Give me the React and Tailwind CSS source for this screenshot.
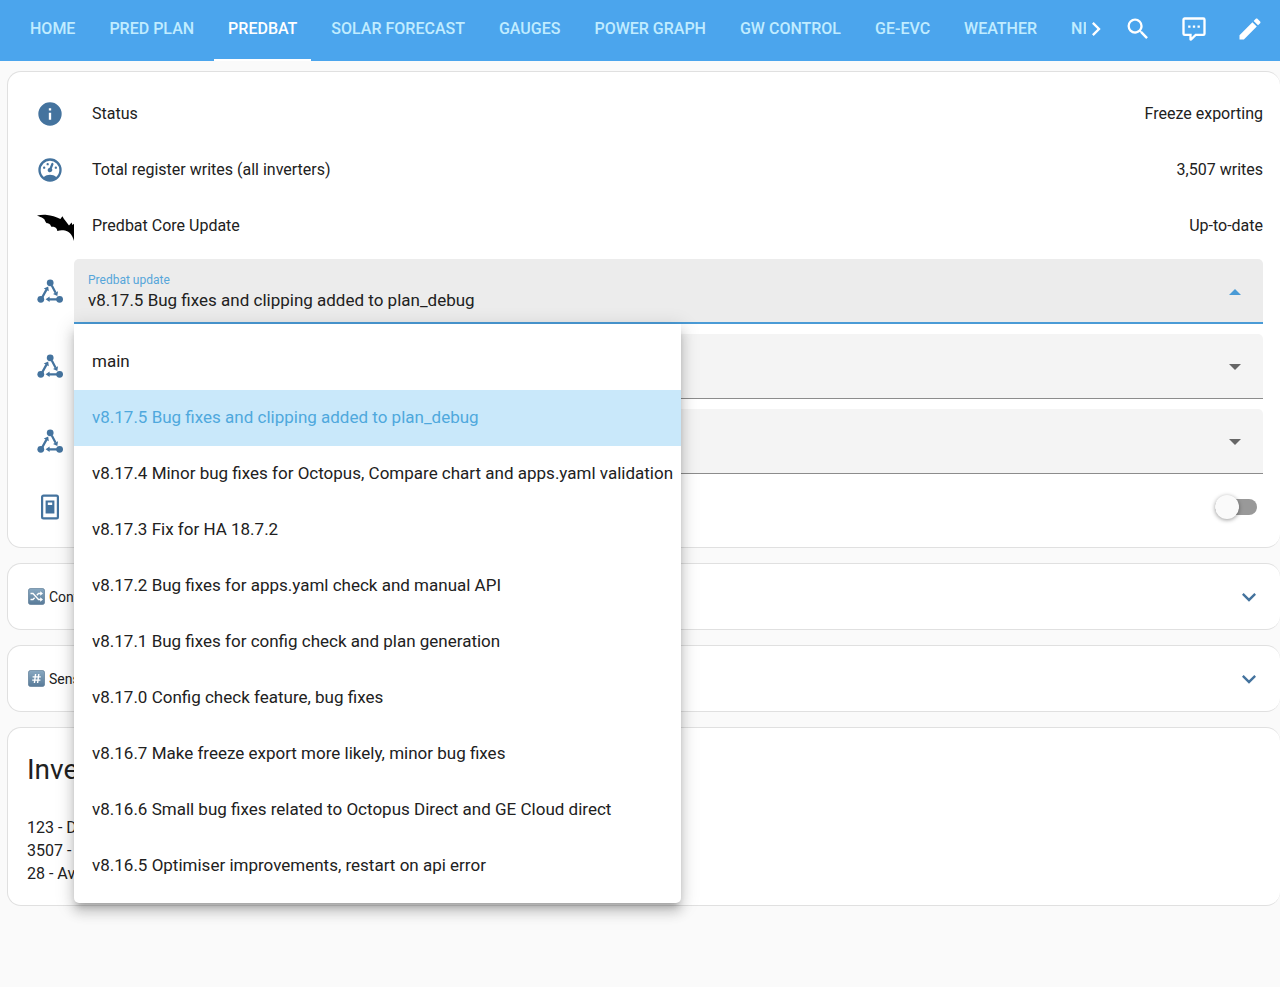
import { useState } from 'react';

const tabs = [
  'Home',
  'Pred Plan',
  'Predbat',
  'Solar Forecast',
  'Gauges',
  'Power Graph',
  'GW Control',
  'GE-EVC',
  'Weather',
  'NI',
];

const versions = [
  'main',
  'v8.17.5 Bug fixes and clipping added to plan_debug',
  'v8.17.4 Minor bug fixes for Octopus, Compare chart and apps.yaml validation',
  'v8.17.3 Fix for HA 18.7.2',
  'v8.17.2 Bug fixes for apps.yaml check and manual API',
  'v8.17.1 Bug fixes for config check and plan generation',
  'v8.17.0 Config check feature, bug fixes',
  'v8.16.7 Make freeze export more likely, minor bug fixes',
  'v8.16.6 Small bug fixes related to Octopus Direct and GE Cloud direct',
  'v8.16.5 Optimiser improvements, restart on api error',
];

const icons = {
  info: 'M13,9H11V7H13M13,17H11V11H13M12,2A10,10 0 0,0 2,12A10,10 0 0,0 12,22A10,10 0 0,0 22,12A10,10 0 0,0 12,2Z',
  gauge:
    'M12,2A10,10 0 0,0 2,12A10,10 0 0,0 12,22A10,10 0 0,0 22,12A10,10 0 0,0 12,2M12,4A8,8 0 0,1 20,12C20,14.4 19,16.5 17.3,18C15.9,16.7 14,16 12,16C10,16 8.2,16.7 6.7,18C5,16.5 4,14.4 4,12A8,8 0 0,1 12,4M14,5.89C13.62,5.9 13.26,6.15 13.1,6.54L11.81,9.77L11.71,10C11,10.13 10.41,10.6 10.14,11.26C9.73,12.29 10.23,13.45 11.26,13.86C12.29,14.27 13.45,13.77 13.86,12.74C14.12,12.08 14,11.32 13.57,10.76L13.67,10.5L14.96,7.29L14.97,7.26C15.17,6.75 14.92,6.17 14.41,5.96C14.28,5.91 14.15,5.89 14,5.89M10,6A1,1 0 0,0 9,7A1,1 0 0,0 10,8A1,1 0 0,0 11,7A1,1 0 0,0 10,6M7,9A1,1 0 0,0 6,10A1,1 0 0,0 7,11A1,1 0 0,0 8,10A1,1 0 0,0 7,9M17,9A1,1 0 0,0 16,10A1,1 0 0,0 17,11A1,1 0 0,0 18,10A1,1 0 0,0 17,9Z',
  search:
    'M9.5,3A6.5,6.5 0 0,1 16,9.5C16,11.11 15.41,12.59 14.44,13.73L14.71,14H15.5L20.5,19L19,20.5L14,15.5V14.71L13.73,14.44C12.59,15.41 11.11,16 9.5,16A6.5,6.5 0 0,1 3,9.5A6.5,6.5 0 0,1 9.5,3M9.5,5C7,5 5,7 5,9.5C5,12 7,14 9.5,14C12,14 14,12 14,9.5C14,7 12,5 9.5,5Z',
  assist:
    'M9,22A1,1 0 0,1 8,21V18H4A2,2 0 0,1 2,16V4C2,2.89 2.9,2 4,2H20A2,2 0 0,1 22,4V16A2,2 0 0,1 20,18H13.9L10.2,21.71C10,21.9 9.75,22 9.5,22H9M10,16V19.08L13.08,16H20V4H4V16H10M17,11H15V9H17V11M13,11H11V9H13V11M9,11H7V9H9V11Z',
  pencil:
    'M20.71,7.04C21.1,6.65 21.1,6 20.71,5.63L18.37,3.29C18,2.9 17.35,2.9 16.96,3.29L15.12,5.12L18.87,8.87M3,17.25V21H6.75L17.81,9.93L14.06,6.18L3,17.25Z',
  right: 'M8.59,16.58L13.17,12L8.59,7.41L10,6L16,12L10,18L8.59,16.58Z',
  down: 'M7.41,8.58L12,13.17L16.59,8.58L18,10L12,16L6,10L7.41,8.58Z',
};

const Icon = ({ name }) => (
  <svg viewBox="0 0 24 24" fill="currentColor" className="size-7 shrink-0" aria-hidden="true">
    <path d={icons[name]} />
  </svg>
);

const NetworkIcon = () => (
  <svg viewBox="0 0 28 28" className="size-7" fill="currentColor" aria-hidden="true">
    <circle cx="14.2" cy="4.8" r="3.4" />
    <circle cx="4.8" cy="21.3" r="3.4" />
    <circle cx="23.6" cy="21.3" r="3.4" />
    <path d="M6.2 19.4L10.5 11.6M15.8 7.6L19.6 14.8M21 21.3H13" stroke="currentColor" strokeWidth="2.2" fill="none" />
    <path d="M12.2 8.4L12.8 13.2L7.8 10.5ZM21.3 18.1L22 13.3L17 15.9ZM9.6 21.3L13.6 18.5V24.1Z" />
  </svg>
);

const SwitchIcon = () => (
  <svg viewBox="0 0 28 28" className="size-7" aria-hidden="true">
    <rect x="6.1" y="2.6" width="15.8" height="22.8" rx="1.4" fill="none" stroke="currentColor" strokeWidth="2.2" />
    <path fill="currentColor" fillRule="evenodd" d="M9.6 7.4H18.4V20.6H9.6ZM11.8 9.4V12H16.2V9.4Z" />
  </svg>
);

const BatIcon = () => (
  <svg viewBox="0 0 48 36" className="h-9 w-12" aria-hidden="true">
    <path d="M11 7.6C14 6.9 18 6.7 21 7C25 7.2 30 8.8 34.4 11L36.4 8.3L38 11L39.6 13L43 17.6L45.6 14.6L46.4 17L48 15.8V33C47 29.6 45.8 27 44 25.3C42.4 23.8 41 23 39 22.6C36 21.8 34 22.2 31.3 22.9C31.2 21.4 30.6 20.2 29.4 19.4C27.6 18.8 26.6 19.2 25.6 18.8C24.4 18.2 24.8 16.2 22.3 15.6C21.2 15.3 20.6 15.4 20 14.6C19 13 19 11.4 17.3 10.4C15.4 9.2 13.4 8.8 11 7.6Z" />
  </svg>
);

const Badge = ({ children }) => (
  <svg viewBox="0 0 17 17" className="size-[17px] shrink-0" aria-hidden="true">
    <defs>
      <linearGradient id="badge" x1="0" y1="0" x2="0" y2="1">
        <stop offset="0" stopColor="#89a9c2" />
        <stop offset="1" stopColor="#587a98" />
      </linearGradient>
    </defs>
    <rect x="0.4" y="0.4" width="16.2" height="16.2" rx="2.4" fill="url(#badge)" stroke="#64829c" strokeWidth="0.8" />
    <g fill="none" stroke="#fff" strokeWidth="1.4">
      {children}
    </g>
  </svg>
);

const Card = ({ className = '', children }) => (
  <section className={`rounded-[14px] border-y border-l border-[#e0e0e0] bg-white ${className}`}>
    {children}
  </section>
);

const Row = ({ icon, label, value }) => (
  <div className="flex h-14 items-center">
    <div className="flex w-12 shrink-0 justify-center text-[#44739e]">{icon}</div>
    <span className="flex-1 pl-[18px]">{label}</span>
    <span>{value}</span>
  </div>
);

const SelectRow = ({ id, label, options, value, onChange, open = false, onToggle, children }) => (
  <div className="flex items-center py-[5px]">
    <div className="flex w-12 shrink-0 justify-center text-[#44739e]">
      <NetworkIcon />
    </div>
    <div className="relative flex-1">
      <div
        className={`relative flex h-[65px] flex-col rounded-t-[5px] ${
          open ? 'border-b-2 border-[#4a9bd6] bg-[#ececec]' : 'border-b border-[#8c8c8c] bg-[#f4f4f4]'
        }`}
      >
        <label
          htmlFor={id}
          className={`pl-3.5 pt-3 text-xs leading-[18px] ${open ? 'text-[#56a6da]' : 'text-[#666666]'}`}
        >
          {label}
        </label>
        <select
          id={id}
          value={value}
          onChange={(e) => onChange(e.target.value)}
          onMouseDown={onToggle}
          className="w-full appearance-none bg-transparent pl-3.5 pr-14 text-[17px] leading-[22px] outline-none"
        >
          {options.map((option) => (
            <option key={option}>{option}</option>
          ))}
        </select>
        <svg
          viewBox="0 0 12 6"
          className={`pointer-events-none absolute right-[22px] top-[30px] h-1.5 w-3 ${
            open ? 'text-[#4a9bd6]' : 'rotate-180 text-[#666666]'
          }`}
          aria-hidden="true"
        >
          <path d="M6 0L12 6H0Z" fill="currentColor" />
        </svg>
      </div>
      {children}
    </div>
  </div>
);

const Expander = ({ title, badge }) => (
  <Card>
    <button type="button" className="flex h-[65px] w-full items-center pl-5 pr-[17px] text-left text-sm">
      {badge}
      <span className="flex-1 pl-1">{title}</span>
      <span className="text-[#44739e]">
        <Icon name="down" />
      </span>
    </button>
  </Card>
);

export default function App() {
  const [active, setActive] = useState('Predbat');
  const [open, setOpen] = useState(true);
  const [version, setVersion] = useState(versions[1]);
  const [mode, setMode] = useState('Monitor');
  const [restore, setRestore] = useState('None');
  const [readOnly, setReadOnly] = useState(false);

  const toggleMenu = (e) => {
    e.preventDefault();
    setOpen(!open);
  };

  return (
    <div className="min-h-screen bg-[#fafafa] font-[Roboto,sans-serif] text-base text-[#212121]">
      <header className="flex h-[61px] items-stretch bg-[#4ba5ed] pr-0.5 text-white">
        <nav className="flex min-w-0 flex-1 gap-1.5 overflow-hidden pl-4">
          {tabs.map((tab) => (
            <a
              key={tab}
              href="#"
              onClick={() => setActive(tab)}
              className={`flex shrink-0 items-center border-b-2 px-3.5 pb-0.5 font-medium uppercase ${
                tab === active ? 'border-white text-white' : 'border-transparent text-[#c0ecff]'
              }`}
            >
              {tab}
            </a>
          ))}
        </nav>
        <div className="flex pb-[3px]">
          <button type="button" aria-label="Scroll tabs" className="flex w-6 items-center justify-center pr-1">
            <Icon name="right" />
          </button>
          <button type="button" aria-label="Search" className="flex w-14 items-center justify-center">
            <Icon name="search" />
          </button>
          <button type="button" aria-label="Assist" className="flex w-14 items-center justify-center">
            <Icon name="assist" />
          </button>
          <button type="button" aria-label="Edit" className="flex w-14 items-center justify-center">
            <Icon name="pencil" />
          </button>
        </div>
      </header>

      <main className="flex flex-col gap-[15px] pl-[7px] pt-[10px]">
        <Card className="pb-3 pl-[18px] pr-[17px] pt-3.5">
          <Row icon={<Icon name="info" />} label="Status" value="Freeze exporting" />
          <Row icon={<Icon name="gauge" />} label="Total register writes (all inverters)" value="3,507 writes" />
          <Row icon={<BatIcon />} label="Predbat Core Update" value="Up-to-date" />

          <SelectRow
            id="update"
            label="Predbat update"
            options={versions}
            value={version}
            onChange={setVersion}
            open={open}
            onToggle={toggleMenu}
          >
            {open && (
              <ul
                role="listbox"
                aria-label="Predbat update"
                className="absolute left-0 top-full z-10 w-max rounded-b-[5px] bg-white pb-[9px] pt-[10px] text-[17px] shadow-[0_6px_6px_-3px_rgba(0,0,0,0.2),0_9px_12px_1px_rgba(0,0,0,0.14),0_3px_19px_2px_rgba(0,0,0,0.12)]"
              >
                {versions.map((item) => (
                  <li
                    key={item}
                    role="option"
                    aria-selected={item === version}
                    onClick={() => {
                      setVersion(item);
                      setOpen(false);
                    }}
                    className={`flex h-14 cursor-pointer items-center pl-[18px] pr-2 ${
                      item === version ? 'bg-[#c9e8fa] text-[#4fa8dd]' : ''
                    }`}
                  >
                    {item}
                  </li>
                ))}
              </ul>
            )}
          </SelectRow>
          <SelectRow
            id="mode"
            label="Predbat mode"
            options={['Monitor', 'Control charge & discharge']}
            value={mode}
            onChange={setMode}
          />
          <SelectRow
            id="restore"
            label="Predbat restore"
            options={['None', 'Previous']}
            value={restore}
            onChange={setRestore}
          />

          <Row
            icon={<SwitchIcon />}
            label={<label htmlFor="read-only">Read only</label>}
            value={
              <input
                id="read-only"
                type="checkbox"
                role="switch"
                checked={readOnly}
                onChange={() => setReadOnly(!readOnly)}
                className="mr-1.5 flex h-4 w-[42px] appearance-none items-center rounded-full bg-[#999999] before:size-6 before:shrink-0 before:rounded-full before:bg-[#fafafa] before:shadow-[0_1px_4px_rgba(0,0,0,0.4)] checked:justify-end"
              />
            }
          />
        </Card>

        <Expander
          title="Config"
          badge={
            <Badge>
              <path d="M2.5 5.5H5L10.5 11.5H13M2.5 11.5H5L6.6 9.8M8.8 7.2L10.5 5.5H13" />
              <path d="M12.2 3.2L15 5.5L12.2 7.8ZM12.2 9.2L15 11.5L12.2 13.8Z" fill="#fff" stroke="none" />
            </Badge>
          }
        />
        <Expander
          title="Sensors"
          badge={
            <Badge>
              <path d="M7.6 4L6.4 13M10.8 4L9.6 13M4.6 6.9H12.8M4.2 10.1H12.4" />
            </Badge>
          }
        />

        <Card className="px-[19px] pb-5 pt-[22px]">
          <h2 className="text-[28px] leading-10">Inverter</h2>
          <ul className="pt-[26px] leading-[23px]">
            <li>123 - Daily</li>
            <li>3507 - Total</li>
            <li>28 - Average</li>
          </ul>
        </Card>
      </main>
    </div>
  );
}
